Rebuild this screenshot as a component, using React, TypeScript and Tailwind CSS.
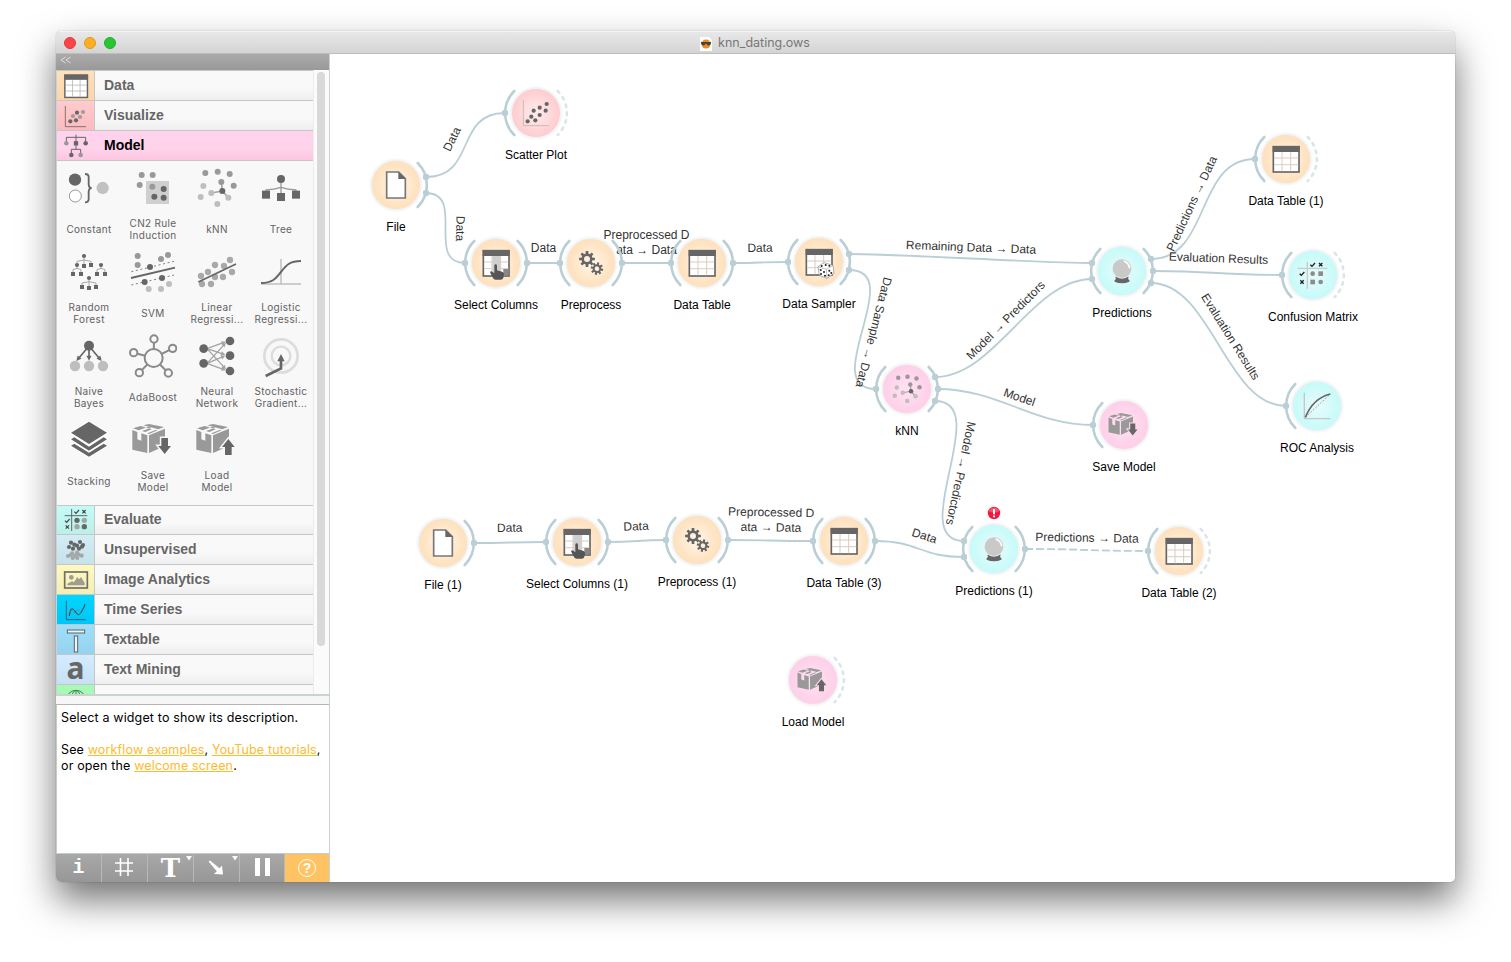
import React from "react";

const DARK = "#666";
const MID = "#999";
const PALE = "#bebebe";
const LINK = "#bacfd5";

type Pt = [number, number];

function Dots({ at, r = 9, fill = DARK }: { at: Pt[]; r?: number; fill?: string }) {
  return (
    <>
      {at.map(([x, y], i) => (
        <circle key={i} cx={x} cy={y} r={r} fill={fill} />
      ))}
    </>
  );
}

function Squares({ at, s = 12, fill = DARK }: { at: Pt[]; s?: number; fill?: string }) {
  return (
    <>
      {at.map(([x, y], i) => (
        <rect key={i} x={x - s / 2} y={y - s / 2} width={s} height={s} fill={fill} />
      ))}
    </>
  );
}

function Arrow({ from, to, color = DARK, w = 5, head = 15 }: { from: Pt; to: Pt; color?: string; w?: number; head?: number }) {
  const dx = to[0] - from[0];
  const dy = to[1] - from[1];
  const len = Math.hypot(dx, dy);
  const ang = (Math.atan2(dy, dx) * 180) / Math.PI;
  return (
    <g transform={`translate(${from[0]} ${from[1]}) rotate(${ang})`}>
      <path d={`M0 0H${len - head + 2}`} stroke={color} strokeWidth={w} />
      <path d={`M${len} 0L${len - head} ${-head / 2}V${head / 2}Z`} fill={color} />
    </g>
  );
}

/* Glyphs are drawn around the origin on a grid of three units to the pixel. */

function TableGlyph({ tint = "#d9cbc0" }: { tint?: string }) {
  return (
    <g>
      <rect x={-38} y={-37} width={77} height={76} fill="#fff" stroke={DARK} strokeWidth={5} />
      <path d="M-12 -22V37M14 -22V37M-36 -3H37M-36 17H37" stroke={tint} strokeWidth={3} />
      <rect x={-40} y={-39} width={81} height={18} fill={DARK} />
    </g>
  );
}

function HandGlyph() {
  return (
    <path
      d="M-5 8C-5 2 3 2 3 8V22L20 27Q25 29 24 35L22 44Q21 50 14 50H-1Q-7 50 -9 45L-17 30C-19 25 -13 23 -10 27L-5 31Z"
      fill="#555"
    />
  );
}

function SelectGlyph() {
  return (
    <g>
      <TableGlyph />
      <rect x={-11} y={-21} width={24} height={57} fill="#cfcfcf" />
      <rect x={22} y={18} width={16} height={19} fill="#888" />
      <HandGlyph />
    </g>
  );
}

function SamplerGlyph() {
  return (
    <g>
      <TableGlyph />
      <path d="M-3 14L15 2L42 10L45 34L24 49L1 40Z" fill="#fff" stroke="#888" strokeWidth={2} />
      <path d="M-3 14L22 22L42 10M22 22L24 48" fill="none" stroke="#888" strokeWidth={1.5} />
      <Dots at={[[8, 12], [31, 11], [20, 9], [5, 24], [15, 30], [6, 36], [18, 41], [31, 26], [37, 33], [29, 40]]} r={3} fill="#222" />
    </g>
  );
}

function FileGlyph() {
  return (
    <g>
      <path d="M-28 -39H8L28 -19V39H-28Z" fill="#fff" stroke="#777" strokeWidth={5} />
      <path d="M7 -40L29 -18H7Z" fill={DARK} />
    </g>
  );
}

function gearPath(r: number, tooth: number) {
  let d = "";
  for (let i = 0; i < 8; i++) {
    const a = (i * Math.PI) / 4;
    const pts: Pt[] = [
      [r, a - 0.24],
      [r + tooth, a - 0.17],
      [r + tooth, a + 0.17],
      [r, a + 0.24],
    ];
    pts.forEach(([q, b], j) => {
      d += `${i + j === 0 ? "M" : "L"}${(q * Math.cos(b)).toFixed(1)} ${(q * Math.sin(b)).toFixed(1)}`;
    });
  }
  return d + "Z";
}

function GearsGlyph() {
  return (
    <g fill={DARK} fillRule="evenodd">
      <path transform="translate(-12 -12)" d={gearPath(17, 7) + "M9 0A9 9 0 1 0 -9 0A9 9 0 1 0 9 0Z"} />
      <path transform="translate(18 17) rotate(12)" d={gearPath(13, 6) + "M7 0A7 7 0 1 0 -7 0A7 7 0 1 0 7 0Z"} />
    </g>
  );
}

function BallGlyph() {
  return (
    <g>
      <path d="M-20 17H20L18 24Q25 28 22 32Q0 41 -22 32Q-25 28 -18 24Z" fill={DARK} />
      <circle cy={-7} r={30} fill="#e8f2f2" />
      <circle cy={-7} r={28} fill="#c9c9c9" />
      <path d="M5 -30Q21 -24 23 -8" stroke="#fff" strokeWidth={5} fill="none" />
    </g>
  );
}

function ScatterGlyph() {
  return (
    <g>
      <path d="M-38 -39V38H39" fill="none" stroke="#c9bcbc" strokeWidth={3} />
      <Dots at={[[-25, 25], [-14, 11], [-2, 22], [-7, -7], [11, 6], [11, -16], [29, -7], [32, -27]]} r={6.3} />
    </g>
  );
}

function KnnGlyph() {
  return (
    <g>
      <path d="M13 -18L16 9L34 29M16 9L-17 15" fill="none" stroke="#a5a5a5" strokeWidth={5} />
      <Dots at={[[-35, -45], [2, -49], [38, -42], [13, -18], [50, -7]]} fill={MID} />
      <Dots at={[[-41, -6], [-17, 15], [-49, 27], [34, 29], [1, 48]]} fill={PALE} />
      <Dots at={[[16, 9]]} />
    </g>
  );
}

function BoxGlyph({ up = false, halo = "#f8f8f8" }: { up?: boolean; halo?: string }) {
  return (
    <g>
      <path d="M-62 -30L-47 -24V-2L-35 2V-20L-17 -14V39L-62 29Z" fill={MID} />
      <path d="M-12 -14L36 -34V18L-12 39Z" fill={MID} />
      <path d="M-60 -35L-37 -42L-4 -32L-23 -24L-33 -27L-5 -37L-14 -40L-43 -29Z" fill={MID} />
      <path d="M-29 -44L-12 -48L33 -39L16 -32ZM-17 -20L8 -30L14 -29L-12 -18Z" fill={MID} />
      <g transform={up ? "translate(34 22)" : "translate(35 17) scale(1 -1)"}>
        <path d="M0 -25L19 -1H10V23H-10V-1H-19Z" fill={DARK} stroke={halo} strokeWidth={9} paintOrder="stroke" />
      </g>
    </g>
  );
}

const CHECK = "M-7 0L-2 5L7 -5";
const CROSS = "M-5 -5L5 5M5 -5L-5 5";

function MatrixGlyph() {
  return (
    <g>
      <path d="M-17 -39V41M-46 -20H43" stroke="#c4cccc" strokeWidth={4} />
      <g fill="none" stroke="#222" strokeWidth={4}>
        <path transform="translate(-1 -31)" d={CHECK} />
        <path transform="translate(23 -31)" d={CROSS} />
        <path transform="translate(-33 -4)" d={CHECK} />
        <path transform="translate(-33 21)" d={CROSS} />
      </g>
      <Dots at={[[-1, -4], [23, 21]]} r={7} fill="#8c8c8c" />
      <Squares at={[[23, -4], [-1, 21]]} s={14} fill="#8c8c8c" />
    </g>
  );
}

function RocGlyph() {
  return (
    <g fill="none">
      <path d="M-38 -40V38H40" stroke="#c9c4c8" strokeWidth={4} />
      <path d="M-34 33L38 -34" stroke={MID} strokeWidth={3} strokeDasharray="5 5" />
      <path d="M-35 34Q-12 -23 40 -36" stroke={DARK} strokeWidth={5} />
    </g>
  );
}

function ConstantGlyph() {
  return (
    <g>
      <circle cx={-42} cy={-25} r={18.5} fill={DARK} />
      <circle cx={-41} cy={24} r={18} fill="#fff" stroke={DARK} strokeWidth={2} />
      <path d="M-12 -42Q-1 -42 -1 -33V-12Q-1 0 8 0Q-1 0 -1 12V33Q-1 43 -12 43" fill="none" stroke={DARK} strokeWidth={5.5} />
      <circle cx={41} r={18.5} fill="#c1c1c1" />
    </g>
  );
}

function RuleGlyph() {
  return (
    <g>
      <rect x={-21} y={-21} width={69} height={69} fill="#cfcfcf" />
      <Dots at={[[-34, -39], [-1, -39], [-40, -9], [-2, -4]]} fill={MID} />
      <Dots at={[[32, 3], [4, 26], [32, 29]]} />
    </g>
  );
}

function TreeGlyph() {
  return (
    <g>
      <path d="M-45 15V6Q-20 4 0 -2Q20 4 45 6V15M0 -25V20" fill="none" stroke={MID} strokeWidth={4} />
      <circle cy={-27} r={12} fill={DARK} />
      <Squares at={[[-45, 20], [0, 27], [45, 20]]} s={24} />
    </g>
  );
}

function ForestGlyph() {
  return (
    <g>
      <path
        d="M-15 -48V-20M-36 -20V-32L-15 -36L6 -32V-22M-48 4V-7L-36 -11L-24 -7V4M24 4V-7L36 -11L48 -7V4M36 -20V-10M-36 -20V-10M0 18V46M-21 44V33L0 29L21 33V44"
        fill="none"
        stroke={MID}
        strokeWidth={2.5}
      />
      <Dots at={[[-15, -48], [-36, -21], [36, -21], [0, 18]]} r={6.3} />
      <Squares at={[[-15, -18], [6, -21], [-48, 6], [-24, 6], [24, 6], [48, 6], [-21, 45], [0, 48], [21, 45]]} />
    </g>
  );
}

function SvmGlyph() {
  return (
    <g>
      <path d="M-65 -1L63 -32M-65 39L63 9" stroke={DARK} strokeWidth={2.5} strokeDasharray="6 8" />
      <path d="M-66 18L66 -13" stroke={DARK} strokeWidth={5.5} />
      <Dots at={[[-46, -48], [45, -51], [24, -39], [-46, -21]]} fill={MID} />
      <Dots at={[[-9, -15], [-25, 30], [27, 18]]} />
      <Dots at={[[48, 36], [-13, 51], [24, 51]]} fill={PALE} />
    </g>
  );
}

function LinearGlyph() {
  return (
    <g>
      <Dots at={[[39, -36], [-6, -21], [21, -18], [45, 0], [-27, 0], [-6, 15], [18, 15], [-48, 12], [-45, 36], [-18, 36]]} r={9.5} fill="#a9a9a9" />
      <path d="M-56 30L57 -24" stroke={DARK} strokeWidth={5} />
    </g>
  );
}

function LogisticGlyph() {
  return (
    <g fill="none">
      <path d="M0 -39V36M-60 36H60" stroke={PALE} strokeWidth={4.5} />
      <path d="M-60 33C-20 32 -14 16 0 0C14 -18 24 -33 60 -33" stroke={DARK} strokeWidth={6} />
    </g>
  );
}

function NaiveGlyph() {
  return (
    <g>
      <Dots at={[[-42, 30], [0, 30], [42, 30]]} r={15.5} fill={PALE} />
      <Arrow from={[0, -30]} to={[-38, 15]} />
      <Arrow from={[0, -30]} to={[0, 14]} />
      <Arrow from={[0, -30]} to={[38, 15]} />
      <circle cy={-31} r={15} fill={DARK} />
    </g>
  );
}

function BoostGlyph() {
  const sat: Pt[] = [[3, -51], [-58, -10], [59, -23], [-41, 50], [46, 51]];
  return (
    <g fill="#f8f8f8" stroke="#8a8a8a" strokeWidth={6}>
      {sat.map(([x, y], i) => (
        <path key={i} d={`M2 6L${x} ${y}`} />
      ))}
      {sat.map(([x, y], i) => (
        <circle key={i} cx={x} cy={y} r={11} />
      ))}
      <circle cx={2} cy={6} r={27} />
    </g>
  );
}

function NeuralGlyph() {
  const outs: Pt[] = [[27, -43], [25, -4], [27, 40]];
  return (
    <g>
      {outs.map(([x, y], i) => (
        <React.Fragment key={i}>
          <Arrow from={[-30, -22]} to={[x, y]} color="#a3a3a3" w={4} head={13} />
          <Arrow from={[-30, 22]} to={[x, y + 3]} color="#a3a3a3" w={4} head={13} />
        </React.Fragment>
      ))}
      <Dots at={[[-40, -22], [-40, 22], [39, -45], [39, -1], [39, 45]]} r={13} />
    </g>
  );
}

function SgdGlyph() {
  return (
    <g fill="none">
      <circle r={50} stroke="#dcdcdc" strokeWidth={8} />
      <circle r={28} stroke="#dcdcdc" strokeWidth={7} />
      <path d="M-46 60L0 37V12" stroke={DARK} strokeWidth={8} />
      <path d="M0 -6L11 16H-11Z" fill={DARK} />
    </g>
  );
}

function StackGlyph() {
  return (
    <g fill={DARK} stroke="#fff" strokeWidth={7} paintOrder="stroke" strokeLinejoin="round">
      <path d="M-54 17L0 50L54 17L44 11L0 38L-44 11Z" />
      <path d="M-54 -2L0 32L54 -2L44 -8L0 20L-44 -8Z" />
      <path d="M0 -55L54 -22L0 12L-54 -22Z" />
    </g>
  );
}

/* Category glyphs */

function CatScatter() {
  return (
    <g>
      <path d="M-32 -30V32H30" fill="none" stroke="#8a7070" strokeWidth={3} />
      <Dots at={[[21, -12], [-9, 0], [12, 3]]} r={6.3} fill="#a59a9a" />
      <Dots at={[[3, -10], [0, 13], [-17, 16]]} r={6.3} />
    </g>
  );
}

function CatModel() {
  return (
    <g>
      <path d="M0 -34V-4M-29 -8V-26H29V-8M0 -2V10M-14 26V10H14V26" fill="none" stroke={DARK} strokeWidth={3} />
      <Dots at={[[-29, -8], [14, 27]]} r={6.8} fill={MID} />
      <Dots at={[[29, -8], [-14, 27]]} r={6.8} />
      <Squares at={[[0, -8]]} s={13} />
    </g>
  );
}

function CatEvaluate() {
  return (
    <g>
      <path d="M-13 -33V33M-34 -13H34" stroke={DARK} strokeWidth={3} />
      <g fill="none" stroke="#444" strokeWidth={3.5}>
        <path transform="translate(2 -25)" d={CHECK} />
        <path transform="translate(24 -25)" d={CROSS} />
        <path transform="translate(-26 2)" d={CHECK} />
        <path transform="translate(-26 21)" d={CROSS} />
      </g>
      <Dots at={[[3, 1], [25, 20]]} r={8} />
      <Dots at={[[25, 1], [3, 20]]} r={8} fill="#a0a6a6" />
    </g>
  );
}

function CatCluster() {
  return (
    <g>
      <Dots at={[[-15, -22], [-21, -9], [-5, -16], [-9, -4], [3, -13], [12, -24], [21, -15], [9, -4], [18, -10]]} r={6.3} />
      <Dots at={[[-24, 18], [-12, 10], [3, 8], [-10, 24], [-3, 17], [4, 24], [17, 17], [8, 14], [-16, 15]]} r={6.3} fill="#a2a8aa" />
    </g>
  );
}

function CatImage() {
  return (
    <g>
      <rect x={-34} y={-24} width={68} height={48} fill="none" stroke="#6d6d6a" strokeWidth={5} />
      <circle cx={-14} cy={-8} r={7} fill="#9d9d92" />
      <path d="M-26 16V11L-12 4L-6 7L4 -9L9 -2L15 -9L26 9V16Z" fill="#9d9d92" />
    </g>
  );
}

function CatSeries() {
  return (
    <g fill="none">
      <path d="M-29 -28V29H29" stroke="#2f6273" strokeWidth={3} />
      <path d="M-22 16L-15 -6L-4 10L6 -2L14 6L24 -10" stroke="#5d94a6" strokeWidth={3} />
      <path d="M-20 18C-16 -8 -10 -6 -4 2C4 14 8 20 16 6C22 -4 25 -10 27 -18" stroke="#22414c" strokeWidth={3} />
    </g>
  );
}

function CatTextable() {
  return (
    <g fill="#eef5f8" stroke="#5c6468" strokeWidth={3}>
      <rect x={-26} y={-30} width={52} height={9} />
      <rect x={-5} y={-12} width={10} height={48} />
    </g>
  );
}

function CatGeo() {
  return (
    <g fill="none" stroke="#4c7a57" strokeWidth={3}>
      <circle cy={0} r={29} />
      <ellipse rx={14} ry={29} />
      <path d="M0 -29V29M-25 -15H25M-29 0H29" />
    </g>
  );
}

function Glyph({ children, size = 48 }: { children: React.ReactNode; size?: number }) {
  return (
    <svg width={size} height={size} viewBox={`${-size * 1.5} ${-size * 1.5} ${size * 3} ${size * 3}`} className="shrink-0">
      {children}
    </svg>
  );
}

interface Category {
  name: string;
  tint: string;
  icon: React.ReactNode;
  size?: string;
}

const before: Category[] = [
  { name: "Data", tint: "bg-linear-to-b from-[#ffe1b9] to-[#fcd5ab]", icon: <g transform="scale(.88)"><TableGlyph tint="#bbb" /></g> },
  { name: "Visualize", tint: "bg-linear-to-b from-[#ffcbcd] to-[#fbbcc0]", icon: <CatScatter /> },
];

const after: Category[] = [
  { name: "Evaluate", tint: "bg-linear-to-b from-[#c3fbf7] to-[#bdefe8]", icon: <CatEvaluate />, size: "h-[29px] leading-[26px]" },
  { name: "Unsupervised", tint: "bg-linear-to-b from-[#d3edf6] to-[#c8e2ea]", icon: <CatCluster /> },
  { name: "Image Analytics", tint: "bg-linear-to-b from-[#fff9bf] to-[#f5eeb4]", icon: <CatImage /> },
  { name: "Time Series", tint: "bg-linear-to-b from-[#00d6ff] to-[#00c6f6]", icon: <CatSeries /> },
  { name: "Textable", tint: "bg-linear-to-b from-[#9fdffb] to-[#96d2ee]", icon: <CatTextable /> },
  { name: "Text Mining", tint: "bg-linear-to-b from-[#d4ecff] to-[#c8e0f4]", icon: "a" },
  { name: "Geo", tint: "bg-[#a5fbb5]", icon: <CatGeo /> },
];

const widgets: { label: string[]; icon: React.ReactNode }[] = [
  { label: ["Constant"], icon: <ConstantGlyph /> },
  { label: ["CN2 Rule", "Induction"], icon: <RuleGlyph /> },
  { label: ["kNN"], icon: <KnnGlyph /> },
  { label: ["Tree"], icon: <TreeGlyph /> },
  { label: ["Random", "Forest"], icon: <ForestGlyph /> },
  { label: ["SVM"], icon: <SvmGlyph /> },
  { label: ["Linear", "Regressi..."], icon: <LinearGlyph /> },
  { label: ["Logistic", "Regressi..."], icon: <LogisticGlyph /> },
  { label: ["Naive", "Bayes"], icon: <NaiveGlyph /> },
  { label: ["AdaBoost"], icon: <BoostGlyph /> },
  { label: ["Neural", "Network"], icon: <NeuralGlyph /> },
  { label: ["Stochastic", "Gradient..."], icon: <SgdGlyph /> },
  { label: ["Stacking"], icon: <StackGlyph /> },
  { label: ["Save", "Model"], icon: <BoxGlyph /> },
  { label: ["Load", "Model"], icon: <BoxGlyph up /> },
];

function CategoryRow({ name, tint, icon, size = "h-[30px] leading-[28px]" }: Category) {
  return (
    <div className={`flex shrink-0 border-b border-[#c6c6c6] bg-linear-to-b from-[#f9f9f9] from-60% to-[#eeeeee] ${size}`}>
      <div className={`flex w-[38px] items-center justify-center border-r border-[#c6c6c6] ${tint}`}>
        {typeof icon === "string" ? (
          <span className="mb-[4px] font-['Noto_Sans',sans-serif] text-[30px] leading-[25px] font-bold text-[#666]">{icon}</span>
        ) : (
          <Glyph size={28}>{icon}</Glyph>
        )}
      </div>
      <div className="pl-[9px] text-[14px] font-bold text-[#666]">{name}</div>
    </div>
  );
}

function Sidebar() {
  return (
    <aside className="flex w-[274px] shrink-0 flex-col border-r border-[#cbd2d2] bg-[#f8f8f8]">
      <div className="h-[16px] shrink-0 bg-linear-to-b from-[#aaaaaa] to-[#999999] pl-[4px]">
        <svg width="12" height="11" viewBox="0 0 12 11" fill="none" stroke="#ddd" strokeWidth="1">
          <path d="M5.5 3L1 6L5.5 9M10.500 3L6 6L10.500 9" />
        </svg>
      </div>
      <div className="flex h-[626px] shrink-0 border-b-2 border-l border-[#cbd2d2]">
        <div className="flex w-[256px] flex-col overflow-hidden border-t border-[#c6c6c6]">
          {before.map((c) => (
            <CategoryRow key={c.name} {...c} />
          ))}
          <div className="flex h-[30px] shrink-0 border-b border-[#c6c6c6] bg-linear-to-b from-[#ffd3ec] from-60% to-[#fcc6e0]">
            <div className="flex w-[38px] items-center justify-center">
              <Glyph size={28}>
                <CatModel />
              </Glyph>
            </div>
            <div className="pl-[9px] text-sm leading-[28px] font-bold text-black">Model</div>
          </div>
          <div className="grid h-[345px] shrink-0 grid-cols-4 content-start border-b border-[#c6c6c6]">
            {widgets.map((w) => (
              <div key={w.label.join(" ")} className="flex h-[84px] flex-col items-center">
                <div className="flex h-[54px] items-center">
                  <Glyph>{w.icon}</Glyph>
                </div>
                <div className="flex h-[28px] flex-col items-center justify-center font-['Inter',sans-serif] text-[10px] leading-[12px] tracking-[0.33px] whitespace-nowrap text-[#626262]">
                  {w.label.map((l) => (
                    <span key={l}>{l}</span>
                  ))}
                </div>
              </div>
            ))}
          </div>
          {after.map((c) => (
            <CategoryRow key={c.name} {...c} />
          ))}
        </div>
        <div className="flex-1 border-l border-[#ececec] bg-[#fbfbfb] pl-[3px]">
          <div className="mt-[2px] h-[574px] w-[8px] rounded-full bg-[#d9d9d9]" />
        </div>
      </div>
      <div className="h-[9px] shrink-0 border-b border-[#b5b5b5] bg-[#f6f6f6]" />
      <div className="h-[149px] shrink-0 border-b border-l border-[#c5cccc] bg-white pt-[5px] pl-[4px] font-['Inter',sans-serif] text-[12.500px] leading-[16px] tracking-[0.15px] whitespace-nowrap text-black">
        <p>Select a widget to show its description.</p>
        <p className="mt-[16px]">
          See <a className="text-[#fdbb2d] underline">workflow examples</a>, <a className="text-[#fdbb2d] underline">YouTube tutorials</a>,
        </p>
        <p>
          or open the <a className="text-[#fdbb2d] underline">welcome screen</a>.
        </p>
      </div>
      <div className="flex flex-1 bg-linear-to-b from-[#a8a8a8] to-[#979797] text-white">
        <div className="flex w-[46px] items-center justify-center border-r border-[#b8b8b8] font-['Liberation_Mono',monospace] text-[20px] leading-none font-bold">i</div>
        <div className="flex w-[46px] items-center justify-center border-r border-[#b8b8b8] pr-px pb-[2px]">
          <svg width="20" height="20" viewBox="0 0 20 20" stroke="#fff" strokeWidth="1.600">
            <path d="M6.500 1V19M14 1V19M1 6H19M1 14H19" />
          </svg>
        </div>
        <div className="relative flex w-[46px] items-center justify-center border-r border-[#b8b8b8] pb-px font-['DejaVu_Serif',serif] text-[26px] leading-none font-bold">
          T
          <svg className="absolute top-[2px] right-[1px]" width="6" height="5" viewBox="0 0 6 5">
            <path d="M0 0H6L3 4.500Z" fill="#fff" />
          </svg>
        </div>
        <div className="relative flex w-[46px] items-center justify-center border-r border-[#b8b8b8] pr-px">
          <svg width="16" height="16" viewBox="0 0 16 16" fill="#fff">
            <path d="M.5 1.500L2 .5L11.500 8.200L14 5.500L15 14.500L6 14L8.800 11.300Z" />
          </svg>
          <svg className="absolute top-[2px] right-[1px]" width="6" height="5" viewBox="0 0 6 5">
            <path d="M0 0H6L3 4.500Z" fill="#fff" />
          </svg>
        </div>
        <div className="flex w-[45px] items-center justify-center gap-[5px] border-r border-[#b8b8b8] pb-[2px]">
          <span className="h-[18px] w-[5px] bg-white" />
          <span className="h-[18px] w-[5px] bg-white" />
        </div>
        <div className="flex flex-1 items-center justify-center bg-[#ffc364] pb-px">
          <span className="flex size-[18px] items-center justify-center rounded-full border-[1.500px] border-white text-sm leading-none font-bold">?</span>
        </div>
      </div>
    </aside>
  );
}

type Kind = "data" | "visual" | "model" | "evaluate";

interface FlowNode {
  x: number;
  y: number;
  label: string;
  kind: Kind;
  icon: React.ReactNode;
  input?: boolean;
  output?: "solid" | "dashed";
}

const smallKnn = (
  <g transform="scale(.75)">
    <KnnGlyph />
  </g>
);
const smallBox = (up: boolean) => (
  <g transform="scale(.75)">
    <BoxGlyph up={up} halo="#ffd6eb" />
  </g>
);

const nodes: FlowNode[] = [
  { x: 396, y: 185, label: "File", kind: "data", icon: <FileGlyph />, output: "solid" },
  { x: 536, y: 113, label: "Scatter Plot", kind: "visual", icon: <ScatterGlyph />, input: true, output: "dashed" },
  { x: 496, y: 263, label: "Select Columns", kind: "data", icon: <SelectGlyph />, input: true, output: "solid" },
  { x: 591, y: 263, label: "Preprocess", kind: "data", icon: <GearsGlyph />, input: true, output: "solid" },
  { x: 702, y: 263, label: "Data Table", kind: "data", icon: <TableGlyph />, input: true, output: "solid" },
  { x: 819, y: 262, label: "Data Sampler", kind: "data", icon: <SamplerGlyph />, input: true, output: "solid" },
  { x: 1122, y: 271, label: "Predictions", kind: "evaluate", icon: <BallGlyph />, input: true, output: "solid" },
  { x: 907, y: 389, label: "kNN", kind: "model", icon: smallKnn, input: true, output: "solid" },
  { x: 1124, y: 425, label: "Save Model", kind: "model", icon: smallBox(false), input: true },
  { x: 1286, y: 159, label: "Data Table (1)", kind: "data", icon: <TableGlyph />, input: true, output: "dashed" },
  { x: 1313, y: 275, label: "Confusion Matrix", kind: "evaluate", icon: <MatrixGlyph />, input: true, output: "dashed" },
  { x: 1317, y: 406, label: "ROC Analysis", kind: "evaluate", icon: <RocGlyph />, input: true },
  { x: 443, y: 543, label: "File (1)", kind: "data", icon: <FileGlyph />, output: "solid" },
  { x: 577, y: 542, label: "Select Columns (1)", kind: "data", icon: <SelectGlyph />, input: true, output: "solid" },
  { x: 697, y: 540, label: "Preprocess (1)", kind: "data", icon: <GearsGlyph />, input: true, output: "solid" },
  { x: 844, y: 541, label: "Data Table (3)", kind: "data", icon: <TableGlyph />, input: true, output: "solid" },
  { x: 994, y: 549, label: "Predictions (1)", kind: "evaluate", icon: <BallGlyph />, input: true, output: "solid" },
  { x: 1179, y: 551, label: "Data Table (2)", kind: "data", icon: <TableGlyph />, input: true, output: "dashed" },
  { x: 813, y: 680, label: "Load Model", kind: "model", icon: smallBox(true), output: "dashed" },
];

interface FlowLink {
  from: Pt;
  to: Pt;
  lines: string[];
  at: Pt;
  angle: number;
  dashed?: boolean;
}

const links: FlowLink[] = [
  { from: [426, 177], to: [505, 113], lines: ["Data"], at: [451.7, 139], angle: -64 },
  { from: [426, 193], to: [465, 263], lines: ["Data"], at: [460.5, 228.5], angle: 91 },
  { from: [527, 263], to: [560, 263], lines: ["Data"], at: [543.5, 248], angle: 0 },
  { from: [622, 263], to: [671, 263], lines: ["Preprocessed D", "ata → Data"], at: [646.5, 242], angle: 0 },
  { from: [733, 263], to: [788, 262], lines: ["Data"], at: [760, 247.5], angle: -1 },
  { from: [849, 254], to: [1092, 263], lines: ["Remaining Data → Data"], at: [971, 247], angle: 2.1 },
  { from: [849, 270], to: [876, 389], lines: ["Data Sample → Data"], at: [874, 332.5], angle: 104.5 },
  { from: [935, 377], to: [1092, 279], lines: ["Model → Predictors"], at: [1005.5, 320], angle: -45 },
  { from: [938, 389], to: [1093, 425], lines: ["Model"], at: [1019.5, 397], angle: 19 },
  { from: [935, 401], to: [964, 541], lines: ["Model → Predictors"], at: [961, 473.5], angle: 102 },
  { from: [1151, 259], to: [1255, 159], lines: ["Predictions → Data"], at: [1191.5, 203.5], angle: -65 },
  { from: [1153, 271], to: [1282, 275], lines: ["Evaluation Results"], at: [1218.5, 258], angle: 2 },
  { from: [1151, 283], to: [1286, 406], lines: ["Evaluation Results"], at: [1230.7, 336.5], angle: 58 },
  { from: [474, 543], to: [546, 542], lines: ["Data"], at: [509.7, 527.5], angle: -0.8 },
  { from: [608, 542], to: [666, 540], lines: ["Data"], at: [636, 526], angle: -2 },
  { from: [728, 540], to: [813, 541], lines: ["Preprocessed D", "ata → Data"], at: [771, 519.5], angle: 1 },
  { from: [875, 541], to: [964, 557], lines: ["Data"], at: [924.5, 535.5], angle: 18 },
  { from: [1025, 549], to: [1148, 551], lines: ["Predictions → Data"], at: [1087, 537.5], angle: 1, dashed: true },
];

function linkPath({ from, to }: FlowLink) {
  const off = Math.min(Math.hypot(to[0] - from[0], to[1] - from[1]) / 2, 60);
  return `M${from[0]} ${from[1]}C${from[0] + off} ${from[1]} ${to[0] - off} ${to[1]} ${to[0]} ${to[1]}`;
}

const gradients: [Kind, string, string][] = [
  ["data", "#fff2e2", "#ffe0bb"],
  ["visual", "#ffe8e9", "#ffcccf"],
  ["model", "#ffe0f1", "#ffcfe8"],
  ["evaluate", "#e4fbfb", "#c5fbf9"],
];

function Canvas() {
  return (
    <svg className="block flex-1 bg-white" width="1125" height="828" viewBox="330 54 1125 828" fontFamily="'Liberation Sans', Arial, sans-serif" fontSize="12">
      <defs>
        {gradients.map(([id, inner, outer]) => (
          <radialGradient key={id} id={id}>
            <stop offset="0.150" stopColor={inner} />
            <stop offset="1" stopColor={outer} />
          </radialGradient>
        ))}
        <radialGradient id="halo">
          <stop offset="0.800" stopColor="#9aa9b0" stopOpacity="0.280" />
          <stop offset="1" stopColor="#9aa9b0" stopOpacity="0" />
        </radialGradient>
      </defs>
      {links.map((l, i) => (
        <g key={i}>
          <path d={linkPath(l)} fill="none" stroke={LINK} strokeWidth={1.8} strokeDasharray={l.dashed ? "8 3" : undefined} />
          <g transform={`translate(${l.at[0]} ${l.at[1]}) rotate(${l.angle})`} fill="#333" textAnchor="middle">
            {l.lines.map((t, j) => (
              <text key={j} y={4.3 + (j - (l.lines.length - 1) / 2) * 15}>
                {t}
              </text>
            ))}
          </g>
        </g>
      ))}
      {nodes.map((n) => (
        <g key={n.label} transform={`translate(${n.x} ${n.y})`}>
          <circle r={27.5} fill="url(#halo)" />
          <circle r={24} fill={`url(#${n.kind})`} />
          <g transform="scale(.3333)">{n.icon}</g>
          <g fill="none" stroke={LINK} strokeWidth={2.6} strokeLinecap="round">
            {n.input && <path d="M-21.700 -22A31 31 0 0 0 -21.700 22" />}
            {n.output === "solid" && <path d="M21.700 -22A31 31 0 0 1 21.700 22" />}
            {n.output === "dashed" && <path d="M21.700 -22A31 31 0 0 1 21.700 22" stroke="#dae5e8" strokeDasharray="2.500 5.400" />}
          </g>
          <text y={46} textAnchor="middle" fill="#000">
            {n.label}
          </text>
        </g>
      ))}
      {links.flatMap((l, i) =>
        [l.from, l.to].map(([x, y], j) => <circle key={`${i}-${j}`} cx={x} cy={y} r={3.2} fill={LINK} />)
      )}
      <g transform="translate(994 513)">
        <circle r={6.2} fill="#f5173d" />
        <path d="M-5.500 -2A6 6 0 0 1 5.500 -2Q0 1 -5.500 -2Z" fill="#fff" opacity={0.25} />
        <path d="M0 -4V1.200M0 2.400V4.200" stroke="#fff" strokeWidth={2} />
      </g>
    </svg>
  );
}

export default function App() {
  return (
    <div className="h-[962px] w-[1511px] overflow-hidden bg-white pt-[31px] pl-[56px] font-['Liberation_Sans',Arial,sans-serif]">
      <div className="flex h-[851px] w-[1399px] flex-col overflow-hidden rounded-[5px] bg-white shadow-[0_0_1px_rgba(0,0,0,0.5),0_18px_36px_rgba(0,0,0,0.55)]">
        <header className="flex h-[23px] shrink-0 items-center border-t border-b border-t-[#f4f4f4] border-b-[#bdbdbd] bg-linear-to-b from-[#e8e8e8] to-[#d4d4d4]">
          <div className="flex w-[200px] gap-2 pl-[8px]">
            <span className="size-3 rounded-full border border-[#e0383c] bg-[#fc4546]" />
            <span className="size-3 rounded-full border border-[#dd9a20] bg-[#fdaf24]" />
            <span className="size-3 rounded-full border border-[#1fae2a] bg-[#27c732]" />
          </div>
          <div className="flex flex-1 items-center justify-center gap-[6px] pt-[2px] pr-[201px] font-['Inter',sans-serif] text-[12.500px] text-[#777]">
            <svg width="12" height="14" viewBox="0 0 12 14">
              <path d="M0 0H9L12 3V14H0Z" fill="#fdfdfd" />
              <circle cx="6" cy="7" r="4.500" fill="#f08a1c" />
              <path d="M1 5H11V6.500Q10 9 8 8.500L6 6.500L4 8.500Q1.500 8.500 1 6.500Z" fill="#444" />
            </svg>
            knn_dating.ows
          </div>
        </header>
        <div className="flex min-h-0 flex-1">
          <Sidebar />
          <Canvas />
        </div>
      </div>
    </div>
  );
}
